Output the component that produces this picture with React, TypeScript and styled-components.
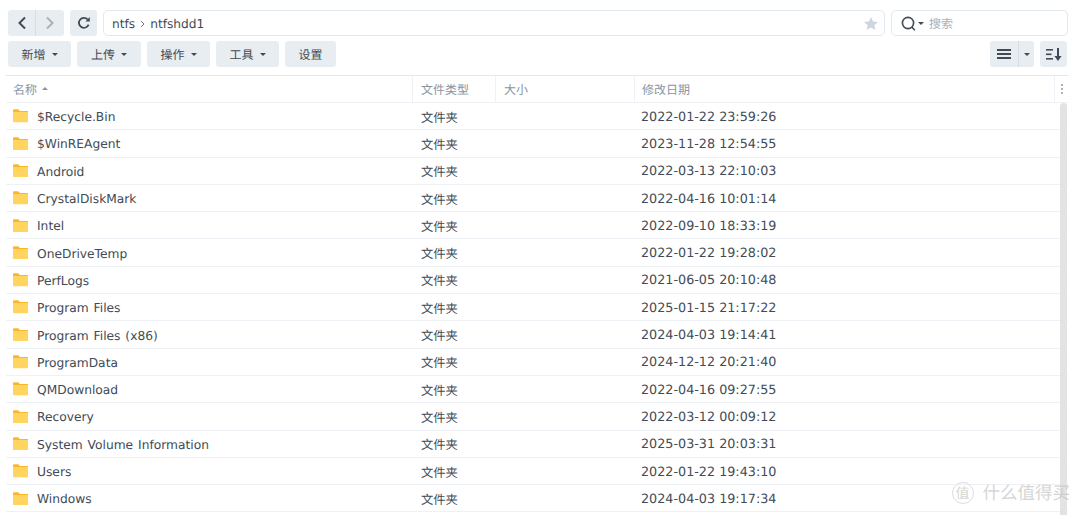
import styled, { createGlobalStyle } from "styled-components";

const files = [
  ["$Recycle.Bin", "2022-01-22 23:59:26"],
  ["$WinREAgent", "2023-11-28 12:54:55"],
  ["Android", "2022-03-13 22:10:03"],
  ["CrystalDiskMark", "2022-04-16 10:01:14"],
  ["Intel", "2022-09-10 18:33:19"],
  ["OneDriveTemp", "2022-01-22 19:28:02"],
  ["PerfLogs", "2021-06-05 20:10:48"],
  ["Program Files", "2025-01-15 21:17:22"],
  ["Program Files (x86)", "2024-04-03 19:14:41"],
  ["ProgramData", "2024-12-12 20:21:40"],
  ["QMDownload", "2022-04-16 09:27:55"],
  ["Recovery", "2022-03-12 00:09:12"],
  ["System Volume Information", "2025-03-31 20:03:31"],
  ["Users", "2022-01-22 19:43:10"],
  ["Windows", "2024-04-03 19:17:34"],
];

const actions = [
  { label: "新增", width: 63, menu: true },
  { label: "上传", width: 64, menu: true },
  { label: "操作", width: 63, menu: true },
  { label: "工具", width: 63, menu: true },
  { label: "设置", width: 51, menu: false },
];

const FONT = `"DejaVu Sans", "Noto Sans CJK SC", sans-serif`;

const GlobalStyle = createGlobalStyle`
  html, body {
    margin: 0;
    height: 515px;
    overflow: hidden;
    background: #fff;
    font-family: ${FONT};
    text-rendering: geometricPrecision;
  }
`;

const Page = styled.div`
  position: relative;
  width: 1080px;
  height: 515px;
  overflow: hidden;
  padding-top: 10px;
  box-sizing: border-box;
`;

const Toolbar = styled.div`
  display: flex;
  gap: 6px;
  height: 26px;
  padding: 0 12px 0 8px;
`;

const ActionBar = styled.div`
  display: flex;
  align-items: stretch;
  gap: 6px;
  height: 26px;
  margin-top: 5px;
  padding: 0 13px 0 8px;
`;

const ButtonGroup = styled.div`
  display: flex;
  background: #e8edf2;
  border-radius: 3px;
  overflow: hidden;
`;

const IconButton = styled.div<{ $width: number; $divided?: boolean }>`
  display: flex;
  align-items: center;
  justify-content: center;
  width: ${({ $width }) => $width}px;
  color: #414b55;
  border-right: ${({ $divided }) => ($divided ? "1px solid #d7dde4" : "none")};
  box-sizing: border-box;
`;

const PathField = styled.div`
  flex: 1;
  display: flex;
  align-items: center;
  gap: 5px;
  padding: 1px 6px 0 8px;
  border: 1px solid #e2e8ef;
  border-radius: 5px;
  font-size: 12.2px;
  color: #414b55;
`;

const Star = styled.svg`
  margin-left: auto;
`;

const SearchField = styled.div`
  width: 177px;
  display: flex;
  align-items: center;
  padding-left: 9px;
  border: 1px solid #e2e8ef;
  border-radius: 5px;
  box-sizing: border-box;
  font-size: 12px;
  color: #a9b1ba;
`;

const Caret = styled.span<{ $color?: string }>`
  display: inline-block;
  width: 0;
  height: 0;
  border-left: 3px solid transparent;
  border-right: 3px solid transparent;
  border-top: 3px solid ${({ $color }) => $color ?? "#414b55"};
`;

const SearchCaret = styled(Caret)`
  margin: 0 5px 0 2px;
`;

const ActionButton = styled.div<{ $width: number }>`
  display: flex;
  align-items: center;
  justify-content: center;
  gap: 6px;
  width: ${({ $width }) => $width}px;
  background: #e8edf2;
  border-radius: 3px;
  font-size: 12px;
  color: #414b55;
`;

const Spacer = styled.div`
  flex: 1;
`;

const Grid = styled.div`
  margin: 8px 0 0 6px;
  width: 1062px;
  border-top: 1px solid #e2e8ef;
  display: flex;
  flex-direction: column;
`;

const HeaderRow = styled.div`
  display: grid;
  grid-template-columns: 407px 83px 139px 420px 13px;
  height: 26px;
  border-bottom: 1px solid #eef1f5;
  font-size: 12px;
  color: #8b949e;
`;

const HeaderCell = styled.div<{ $pad?: number }>`
  display: flex;
  align-items: center;
  gap: 5px;
  padding-left: ${({ $pad }) => $pad ?? 7}px;
  border-right: 1px solid #eef1f5;
  box-sizing: border-box;
  min-width: 0;
`;

const LastHeaderCell = styled.div`
  display: flex;
  flex-direction: column;
  align-items: center;
  justify-content: center;
  gap: 2px;
`;

const Dot = styled.i`
  width: 2px;
  height: 2px;
  background: #aab2bb;
`;

const SortUp = styled.span`
  width: 0;
  height: 0;
  margin-top: -1px;
  border-left: 3px solid transparent;
  border-right: 3px solid transparent;
  border-bottom: 3px solid #8b949e;
`;

const BodyWrap = styled.div`
  position: relative;
`;

const Row = styled.div`
  display: grid;
  grid-template-columns: 407px 83px 139px 1fr;
  height: 27.3px;
  align-items: center;
  box-sizing: border-box;
  border-bottom: 1px solid #eef1f5;
  color: #414b55;
`;

const NameCell = styled.div`
  display: flex;
  align-items: center;
  gap: 9px;
  padding-left: 7px;
  font-size: 12.25px;
  word-spacing: 1px;
`;

const NameLabel = styled.span`
  padding-top: 2px;
`;

const TypeCell = styled.div`
  padding: 1px 0 0 8px;
  font-size: 12.3px;
`;

const DateCell = styled.div`
  padding: 2px 0 0 6px;
  font-size: 12.75px;
`;

const Scrollbar = styled.div`
  position: absolute;
  top: 0;
  left: 1054px;
  width: 7px;
  height: 420px;
  background: #e3e3e3;
  border-radius: 4px 4px 0 0;
`;

const Watermark = styled.div`
  position: absolute;
  right: 10px;
  bottom: 10px;
  display: flex;
  align-items: center;
  gap: 9px;
  font-size: 17.5px;
  color: rgba(195, 195, 195, 0.7);
`;

const WatermarkBadge = styled.span`
  display: flex;
  align-items: center;
  justify-content: center;
  width: 22px;
  height: 22px;
  box-sizing: border-box;
  border: 1px solid rgba(205, 205, 205, 0.7);
  border-radius: 50%;
  font-size: 14px;
`;

const Folder = () => (
  <svg width="15" height="13.5" viewBox="0 0 16 14">
    <path d="M0 1.2C0 .5.5 0 1.2 0h4.3l1.8 2H16v3H0z" fill="#fbb62c" />
    <path d="M0 3h16v9.8c0 .7-.5 1.2-1.2 1.2H1.2C.5 14 0 13.5 0 12.8z" fill="#ffd45f" />
  </svg>
);

const Chevron = ({ dir, color }: { dir: "left" | "right"; color: string }) => (
  <svg width="10" height="14" viewBox="0 0 10 14" fill="none" stroke={color} strokeWidth="2">
    <path d={dir === "left" ? "M8 1.5 2.5 7 8 12.5" : "M2 1.5 7.5 7 2 12.5"} />
  </svg>
);

const App = () => {
  return (
    <Page>
      <GlobalStyle />
      <Toolbar>
        <ButtonGroup>
          <IconButton $width={28} $divided>
            <Chevron dir="left" color="#414b55" />
          </IconButton>
          <IconButton $width={28}>
            <Chevron dir="right" color="#a9b1ba" />
          </IconButton>
        </ButtonGroup>
        <ButtonGroup>
          <IconButton $width={27}>
            <svg width="14" height="14" viewBox="0 0 14 14" fill="none">
              <path d="M11.6 8.6A5 5 0 1 1 10.6 3.4" stroke="#414b55" strokeWidth="1.8" />
              <path d="M8.4 5.4h4.4V1z" fill="#414b55" />
            </svg>
          </IconButton>
        </ButtonGroup>
        <PathField>
          <span>ntfs</span>
          <svg width="5" height="8" viewBox="0 0 5 8" fill="none" stroke="#727b85">
            <path d="M1 1l3 3-3 3" />
          </svg>
          <span>ntfshdd1</span>
          <Star width="14" height="13" viewBox="0 0 15 14">
            <path d="M7.5 0l2.2 4.8 5.3.6-3.9 3.5 1.1 5.1-4.7-2.6L2.8 14l1.1-5.1L0 5.4l5.3-.6z" fill="#cdd6e0" />
          </Star>
        </PathField>
        <SearchField>
          <svg width="15" height="15" viewBox="0 0 15 15" fill="none" stroke="#414b55" strokeWidth="1.6">
            <circle cx="7" cy="7" r="5.6" />
            <path d="M10.8 11l3 3.2" />
          </svg>
          <SearchCaret />
          <span>搜索</span>
        </SearchField>
      </Toolbar>

      <ActionBar>
        {actions.map((a) => (
          <ActionButton key={a.label} $width={a.width}>
            <span>{a.label}</span>
            {a.menu && <Caret />}
          </ActionButton>
        ))}
        <Spacer />
        <ButtonGroup>
          <IconButton $width={29} $divided>
            <svg width="14" height="10" viewBox="0 0 14 10" fill="#414b55">
              <rect width="14" height="2" />
              <rect y="4" width="14" height="2" />
              <rect y="8" width="14" height="2" />
            </svg>
          </IconButton>
          <IconButton $width={15}>
            <Caret />
          </IconButton>
        </ButtonGroup>
        <ButtonGroup>
          <IconButton $width={27}>
            <svg width="16" height="13" viewBox="0 0 16 13" fill="#414b55">
              <rect width="7" height="1.6" y="1" />
              <rect width="5.5" height="1.6" y="5.5" />
              <rect width="7" height="1.6" y="10" />
              <path d="M11 0h2v8h2.6L12 13 8.4 8H11z" />
            </svg>
          </IconButton>
        </ButtonGroup>
      </ActionBar>

      <Grid>
        <HeaderRow>
          <HeaderCell>
            名称
            <SortUp />
          </HeaderCell>
          <HeaderCell $pad={8}>文件类型</HeaderCell>
          <HeaderCell $pad={8}>大小</HeaderCell>
          <HeaderCell>修改日期</HeaderCell>
          <LastHeaderCell>
            <Dot />
            <Dot />
            <Dot />
          </LastHeaderCell>
        </HeaderRow>
        <BodyWrap>
          {files.map(([name, date]) => (
            <Row key={name}>
              <NameCell>
                <Folder />
                <NameLabel>{name}</NameLabel>
              </NameCell>
              <TypeCell>文件夹</TypeCell>
              <div />
              <DateCell>{date}</DateCell>
            </Row>
          ))}
          <Scrollbar />
        </BodyWrap>
      </Grid>

      <Watermark>
        <WatermarkBadge>值</WatermarkBadge>
        什么值得买
      </Watermark>
    </Page>
  );
};

export default App;
